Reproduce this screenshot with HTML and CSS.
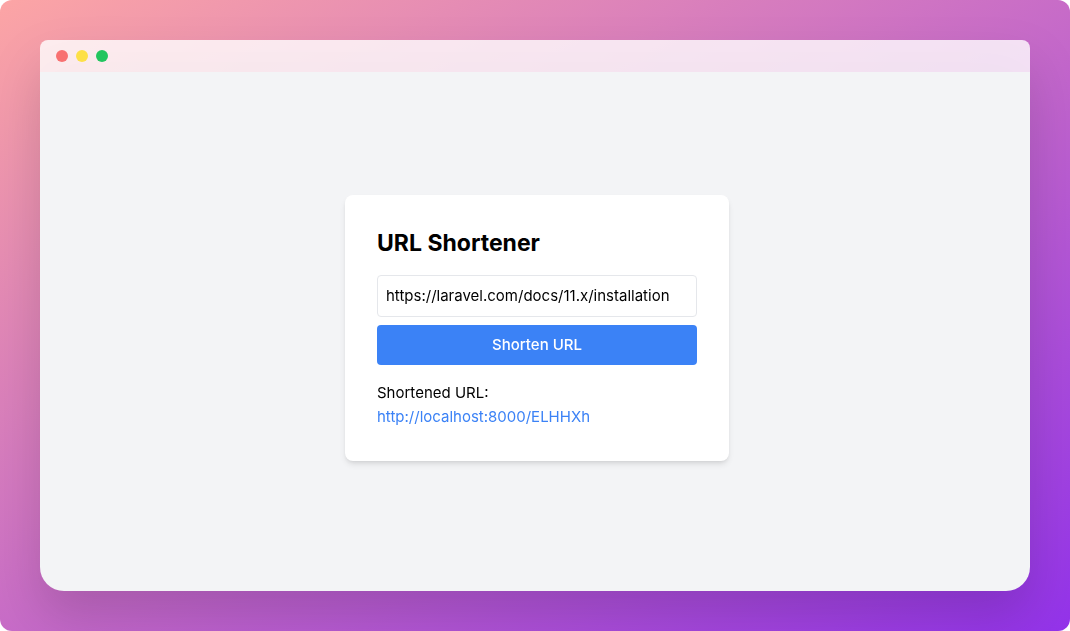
FILE: index.html
```html
<!DOCTYPE html>
<html lang="en">
<head>
  <meta charset="utf-8">
  <meta name="viewport" content="width=device-width, initial-scale=1">
  <title>URL Shortener</title>
  <link rel="stylesheet" href="styles.css">
</head>
<body>
  <div class="backdrop">
    <div class="window-shadow">
      <div class="window">
        <div class="titlebar">
          <span class="dot dot-close"></span>
          <span class="dot dot-minimize"></span>
          <span class="dot dot-expand"></span>
        </div>
        <main class="content">
          <section class="card">
            <h1 class="title">URL Shortener</h1>
            <form class="form">
              <input class="field" type="text" name="url" aria-label="URL to shorten" value="https://laravel.com/docs/11.x/installation">
              <button class="submit" type="button">Shorten URL</button>
            </form>
            <p class="result">Shortened URL:<br><a class="link" href="http://localhost:8000/ELHHXh">http://localhost:8000/ELHHXh</a></p>
          </section>
        </main>
      </div>
    </div>
  </div>
</body>
</html>
```

FILE: styles.css
```css
* {
  box-sizing: border-box;
}

body {
  margin: 0;
  background: #fff;
  color: #000;
  font-family: Inter, "Liberation Sans", sans-serif;
  font-size: 15px;
  line-height: 24px;
}

.backdrop {
  display: flex;
  min-height: 100vh;
  padding: 40px;
  overflow: hidden;
  border-radius: 12px;
  background: linear-gradient(to bottom right, #fca5a5, #9333ea);
}

.window-shadow {
  display: flex;
  flex: 1;
  filter: drop-shadow(0 25px 25px rgba(0, 0, 0, 0.15));
}

.window {
  display: flex;
  flex: 1;
  flex-direction: column;
  overflow: hidden;
  border-radius: 8px 8px 24px 24px;
}

.titlebar {
  display: flex;
  align-items: center;
  gap: 8px;
  height: 32px;
  padding: 0 16px;
  background: rgba(255, 255, 255, 0.8);
}

.dot {
  width: 12px;
  height: 12px;
  border-radius: 50%;
}

.dot-close {
  background: #f87171;
}

.dot-minimize {
  background: #fde047;
}

.dot-expand {
  background: #22c55e;
}

.content {
  display: flex;
  flex: 1;
  align-items: center;
  justify-content: center;
  padding: 0 0 7px 4px;
  background: #f3f4f6;
}

.card {
  width: 384px;
  max-width: 100%;
  padding: 32px;
  border-radius: 8px;
  background: #fff;
  box-shadow: 0 4px 6px -1px rgba(0, 0, 0, 0.1), 0 2px 4px -2px rgba(0, 0, 0, 0.1);
}

.title {
  margin: 0 0 16px;
  font-size: 23px;
  font-weight: 700;
  line-height: 32px;
}

.form {
  display: flex;
  flex-direction: column;
  gap: 8px;
}

.field {
  width: 100%;
  padding: 8px;
  border: 1px solid #e5e7eb;
  border-radius: 4px;
  background: #fff;
  color: inherit;
  font: inherit;
}

.submit {
  width: 100%;
  padding: 8px;
  border: 0;
  border-radius: 4px;
  background: #3b82f6;
  color: #fff;
  font: inherit;
  font-weight: 500;
}

.result {
  margin: 16px 0 0;
}

.link {
  color: #3b82f6;
  text-decoration: none;
}
```
